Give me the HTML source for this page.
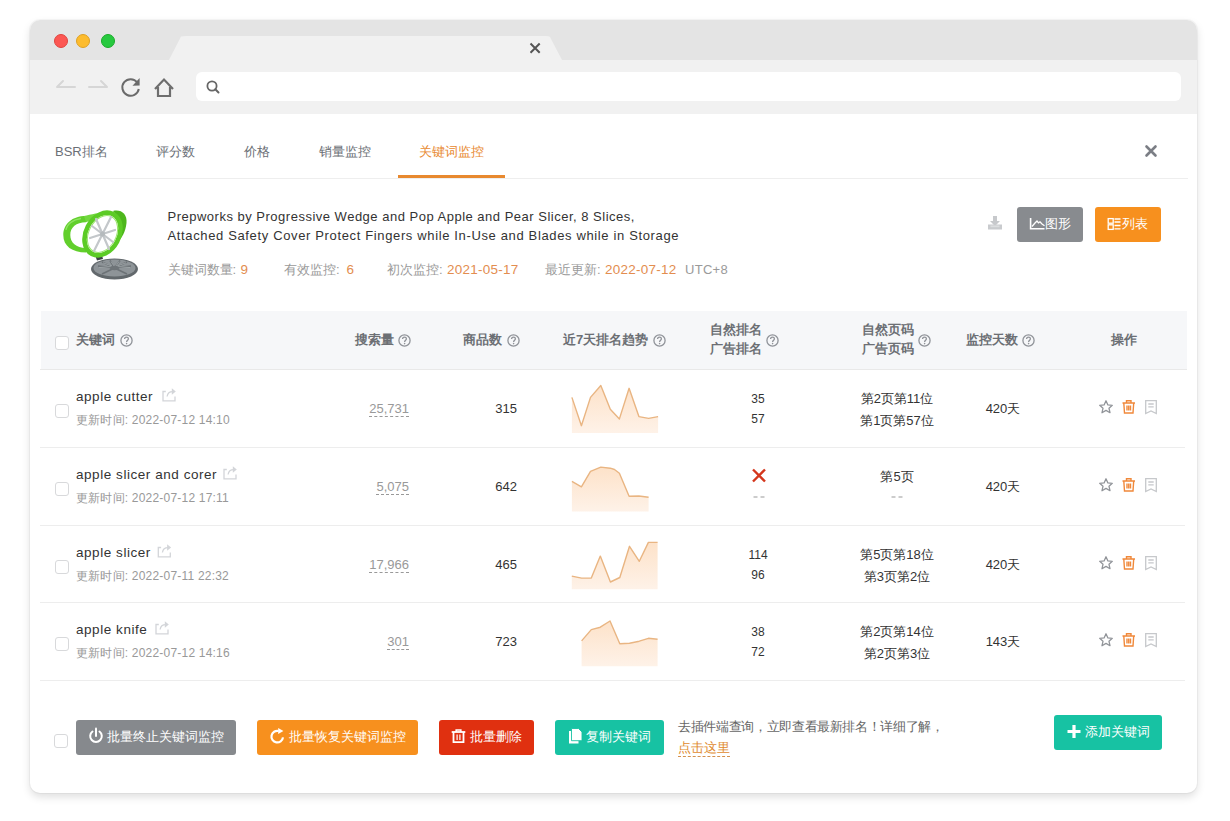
<!DOCTYPE html>
<html><head><meta charset="utf-8">
<style>
*{box-sizing:border-box;margin:0;padding:0}
html,body{width:1230px;height:821px;background:#fff;overflow:hidden;font-family:"Liberation Sans",sans-serif;color:#333}
.a{position:absolute;white-space:nowrap}
#win{position:absolute;left:30px;top:20px;width:1167px;height:773px;border-radius:10px;background:#fff;box-shadow:0 0 0 1px rgba(0,0,0,.03),0 4px 9px rgba(0,0,0,.13);overflow:hidden}
#title{position:absolute;left:0;top:0;width:1167px;height:40px;background:#e4e4e4}
#toolbar{position:absolute;left:0;top:40px;width:1167px;height:54px;background:#f1f1f1}
.dot{position:absolute;width:14px;height:14px;border-radius:50%}
#addr{position:absolute;left:166px;top:52px;width:985px;height:29px;background:#fff;border-radius:6px}
.tabt{font-size:13px;color:#6b6f76;top:144px;height:16px;line-height:16px}
.hd{font-size:13px;color:#6c6f74;font-weight:bold;line-height:16px;height:16px}
.q{position:absolute}
.cb{position:absolute;width:14px;height:14px;border:1px solid #d8d9db;border-radius:3px;background:#fff}
.kw{font-size:13.5px;color:#333;letter-spacing:.55px;line-height:16px;height:16px}
.ut{font-size:12px;color:#999;line-height:14px;height:14px;letter-spacing:.2px}
.num{font-size:13px;color:#333;line-height:16px;height:16px}
.sv{font-size:13px;color:#999;line-height:14px;height:15px;border-bottom:1px dashed #999}
.rk{font-size:12px;color:#333;line-height:14px;height:14px;text-align:center;width:40px}
.pg{font-size:13px;color:#333;line-height:16px;height:16px;text-align:center;width:90px}
.day{font-size:13px;color:#333;line-height:16px;height:16px;text-align:center;width:60px}
.meta{top:262px;font-size:13px;line-height:16px;color:#9a9a9a}
.mv{color:#e38d4f;font-size:13.5px}
.line{position:absolute;left:10px;width:1147px;height:1px;background:#ebeef5}
.btn{position:absolute;height:35px;border-radius:3px;color:#fff;font-size:13px;line-height:35px;white-space:nowrap}
</style></head><body>
<div id="win">
  <div id="title"></div>
  <div class="dot" style="left:24px;top:14px;background:#fc5753;border:1px solid #e0443e"></div>
  <div class="dot" style="left:46px;top:14px;background:#fdbc2e;border:1px solid #dea123"></div>
  <div class="dot" style="left:71px;top:14px;background:#27c93f;border:1px solid #1aab29"></div>
  <svg class="a" style="left:0;top:0" width="1167" height="94">
    <path d="M139 40 L151 16.5 Q153 16 156 16 L516 16 Q519 16 520 17 L532 40 Z" fill="#f1f1f1"/>
    <path d="M500.5 23.5 L509.7 32.7 M509.7 23.5 L500.5 32.7" stroke="#555" stroke-width="2"/>
  </svg>
  <div id="toolbar"></div>
  <div id="addr"></div>
  <svg class="a" style="left:0;top:40px" width="200" height="54">
    <path d="M27 27 L45 27 M27 27 L33 21" stroke="#d6d6d6" stroke-width="2" fill="none" stroke-linecap="round"/>
    <path d="M59 27 L77 27 M77 27 L71 21" stroke="#d6d6d6" stroke-width="2" fill="none" stroke-linecap="round"/>
    <path d="M108.8 29 A8.3 8.3 0 1 1 107.3 22.5" stroke="#6b6b6b" stroke-width="2" fill="none"/>
    <path d="M109.6 18 L109.6 25.6 L102.5 25.7 Z" fill="#6b6b6b"/>
    <path d="M125 29 L134 19.5 L143 29 M128 27 L128 36 L140 36 L140 27" stroke="#6e6e6e" stroke-width="2.2" fill="none" stroke-linejoin="miter"/>
    <circle cx="182" cy="26" r="4.6" stroke="#666" stroke-width="1.8" fill="none"/>
    <path d="M185.3 29.3 L188.5 32.5" stroke="#666" stroke-width="2" stroke-linecap="round"/>
  </svg>
</div>

<!-- content (page coordinates) -->
<div class="a tabt" style="left:55px">BSR排名</div>
<div class="a tabt" style="left:156px">评分数</div>
<div class="a tabt" style="left:244px">价格</div>
<div class="a tabt" style="left:319px">销量监控</div>
<div class="a tabt" style="left:419px;color:#e8892f">关键词监控</div>
<div class="a" style="left:398px;top:175px;width:107px;height:3px;background:#e8892f"></div>
<div class="a" style="left:40px;top:178px;width:1148px;height:1px;background:#eeeeee"></div>
<svg class="a" style="left:1140px;top:140px" width="22" height="22"><path d="M6.5 6.5 L15.5 15.5 M15.5 6.5 L6.5 15.5" stroke="#7b7e85" stroke-width="2.6" stroke-linecap="round"/></svg>

<!-- product -->
<svg class="a" style="left:55px;top:200px" width="90" height="90" id="prod">
  <ellipse cx="59.5" cy="69" rx="23.5" ry="10.5" fill="#62686c"/>
  <ellipse cx="59.5" cy="68" rx="21" ry="8.4" fill="#8e9498"/>
  <g stroke="#6c7276" stroke-width="1.6"><path d="M59.5 68 L43 66 M59.5 68 L47 62 M59.5 68 L55 60.5 M59.5 68 L65 60.5 M59.5 68 L72 62 M59.5 68 L76 66 M59.5 68 L72 74 M59.5 68 L47 74"/></g>
  <g stroke="#a3a9ac" stroke-width="0.8"><path d="M44 67.5 L57 66.5 M48 62.8 L57 66 M56 61.5 L59 66 M64 61.5 L61 66 M71 62.8 L62 66 M75 67.5 L62 66.5"/></g>
  <ellipse cx="59.5" cy="68" rx="4.5" ry="2.2" fill="#6e7478"/>
  <path d="M39.5 53.5 L46 51.5 L48 59 L42 60.5 Z" fill="#3b4144"/>
  <path d="M31 16 C17 16 8.3 24 8.3 35 C8.3 46 17 52.5 31 52.5 L31 48 C21 48 15.3 42.5 15.3 35 C15.3 27.5 21 22.3 31 22.3 Z" fill="#62cf2c"/>
  <path d="M11 30 C12 24 18 19.5 26 18.5" stroke="#8ee362" stroke-width="1.3" fill="none"/>
  <path d="M29 16 C36 14 48 12 56 12.5 L52 18 C44 18 36 20 31 22.3 Z" fill="#72d83e"/>
  <path d="M58 11 C66 9 72.5 14 71.5 23 C70.5 32 67 38 62 43 L60.5 41 C64.5 34 66 26 63 17 Z" fill="#4db61c"/>
  <ellipse cx="47.5" cy="34" rx="16.5" ry="22.5" transform="rotate(28 47.5 34)" fill="#fff" stroke="#5ccb25" stroke-width="4.6"/>
  <ellipse cx="47.5" cy="34" rx="13.6" ry="19.5" transform="rotate(28 47.5 34)" fill="none" stroke="#9be56f" stroke-width="1"/>
  <g stroke="#c3c7ca" stroke-width="2.2" stroke-linecap="round"><path d="M47.5 34 L56 17 M47.5 34 L39 51 M47.5 34 L60 30 M47.5 34 L35 38 M47.5 34 L41 19 M47.5 34 L54 49 M47.5 34 L58 42 M47.5 34 L37 26"/></g>
  <circle cx="47.5" cy="34" r="2.5" fill="#b5babd"/>
</svg>
<div class="a" style="left:167.5px;top:207px;font-size:13px;line-height:19px;color:#333;letter-spacing:.5px">Prepworks by Progressive Wedge and Pop Apple and Pear Slicer, 8 Slices,</div>
<div class="a" style="left:167.5px;top:226px;font-size:13px;line-height:19px;color:#333;letter-spacing:.64px">Attached Safety Cover Protect Fingers while In-Use and Blades while in Storage</div>
<div class="a meta" style="left:167.5px">关键词数量:</div>
<div class="a meta mv" style="left:240.5px">9</div>
<div class="a meta" style="left:284px">有效监控:</div>
<div class="a meta mv" style="left:346.5px">6</div>
<div class="a meta" style="left:387px">初次监控:</div>
<div class="a meta mv" style="left:447px;letter-spacing:.25px">2021-05-17</div>
<div class="a meta" style="left:545px">最近更新:</div>
<div class="a meta mv" style="left:605px;letter-spacing:.25px">2022-07-12</div>
<div class="a meta" style="left:685px;letter-spacing:.3px">UTC+8</div>
<svg class="a" style="left:987px;top:215px" width="16" height="16">
  <path d="M6 1 L10 1 L10 6 L13 6 L8 11 L3 6 L6 6 Z" fill="#c7c9cc"/>
  <path d="M1 9.5 L15 9.5 L15 14.5 L1 14.5 Z" fill="#c9cbce"/><path d="M3.5 10.5 L12.5 10.5 L12.5 12.2 L3.5 12.2 Z" fill="#dcdee0"/>
</svg>
<div class="btn" style="left:1017px;top:207px;width:66px;background:#888b8f;"></div>
<div class="btn" style="left:1095px;top:207px;width:66px;background:#f7901e;"></div>
<svg class="a" style="left:1028px;top:216px" width="20" height="16">
  <path d="M2.6 2 L2.6 12.8 L16.5 12.8" stroke="#fff" stroke-width="1.6" fill="none"/>
  <path d="M4 10.5 L7 7 L9 5 L10.5 6.8 L12 5.8 L14 8 L16.5 9.8" stroke="#fff" stroke-width="1.3" fill="none"/>
</svg>
<div class="a" style="left:1045px;top:216px;font-size:13px;line-height:16px;color:#fff">图形</div>
<svg class="a" style="left:1105px;top:216px" width="18" height="16">
  <rect x="3.2" y="2.6" width="5" height="4.6" stroke="#fff" stroke-width="1.3" fill="none"/>
  <rect x="3.2" y="8.8" width="5" height="4.6" stroke="#fff" stroke-width="1.3" fill="none"/>
  <path d="M9.5 3 L15.5 3 M9.5 6 L15.5 6 M9.5 9.5 L15.5 9.5 M9.5 12.8 L15.5 12.8" stroke="#fff" stroke-width="1.3"/>
</svg>
<div class="a" style="left:1121.5px;top:216px;font-size:13px;line-height:16px;color:#fff">列表</div>
<!--TABLE-->
<div class="a" style="left:41px;top:311px;width:1146px;height:58px;background:#f6f7f9"></div>
<div class="a" style="left:40px;top:369px;width:1147px;height:1px;background:#e9e9e9"></div>
<div class="cb" style="left:55px;top:336px"></div>
<div class="a hd" style="left:76px;top:332px">关键词</div><svg class="a q" style="left:119.5px;top:334px" width="14" height="14"><circle cx="6.5" cy="6.5" r="5.6" fill="none" stroke="#909399" stroke-width="1.3"/><path d="M4.6 5 C4.6 3.8 5.4 3.1 6.5 3.1 C7.6 3.1 8.4 3.8 8.4 4.8 C8.4 6.1 6.6 6.3 6.6 7.9" fill="none" stroke="#909399" stroke-width="1.3"/><circle cx="6.6" cy="9.6" r="0.8" fill="#909399"/></svg>
<div class="a hd" style="left:355px;top:332px">搜索量</div><svg class="a q" style="left:398px;top:334px" width="14" height="14"><circle cx="6.5" cy="6.5" r="5.6" fill="none" stroke="#909399" stroke-width="1.3"/><path d="M4.6 5 C4.6 3.8 5.4 3.1 6.5 3.1 C7.6 3.1 8.4 3.8 8.4 4.8 C8.4 6.1 6.6 6.3 6.6 7.9" fill="none" stroke="#909399" stroke-width="1.3"/><circle cx="6.6" cy="9.6" r="0.8" fill="#909399"/></svg>
<div class="a hd" style="left:463px;top:332px">商品数</div><svg class="a q" style="left:506.5px;top:334px" width="14" height="14"><circle cx="6.5" cy="6.5" r="5.6" fill="none" stroke="#909399" stroke-width="1.3"/><path d="M4.6 5 C4.6 3.8 5.4 3.1 6.5 3.1 C7.6 3.1 8.4 3.8 8.4 4.8 C8.4 6.1 6.6 6.3 6.6 7.9" fill="none" stroke="#909399" stroke-width="1.3"/><circle cx="6.6" cy="9.6" r="0.8" fill="#909399"/></svg>
<div class="a hd" style="left:563px;top:332px">近7天排名趋势</div><svg class="a q" style="left:653px;top:334px" width="14" height="14"><circle cx="6.5" cy="6.5" r="5.6" fill="none" stroke="#909399" stroke-width="1.3"/><path d="M4.6 5 C4.6 3.8 5.4 3.1 6.5 3.1 C7.6 3.1 8.4 3.8 8.4 4.8 C8.4 6.1 6.6 6.3 6.6 7.9" fill="none" stroke="#909399" stroke-width="1.3"/><circle cx="6.6" cy="9.6" r="0.8" fill="#909399"/></svg>
<div class="a hd" style="left:710px;top:322px">自然排名</div>
<div class="a hd" style="left:710px;top:341px">广告排名</div><svg class="a q" style="left:766px;top:334px" width="14" height="14"><circle cx="6.5" cy="6.5" r="5.6" fill="none" stroke="#909399" stroke-width="1.3"/><path d="M4.6 5 C4.6 3.8 5.4 3.1 6.5 3.1 C7.6 3.1 8.4 3.8 8.4 4.8 C8.4 6.1 6.6 6.3 6.6 7.9" fill="none" stroke="#909399" stroke-width="1.3"/><circle cx="6.6" cy="9.6" r="0.8" fill="#909399"/></svg>
<div class="a hd" style="left:862px;top:322px">自然页码</div>
<div class="a hd" style="left:862px;top:341px">广告页码</div><svg class="a q" style="left:918px;top:334px" width="14" height="14"><circle cx="6.5" cy="6.5" r="5.6" fill="none" stroke="#909399" stroke-width="1.3"/><path d="M4.6 5 C4.6 3.8 5.4 3.1 6.5 3.1 C7.6 3.1 8.4 3.8 8.4 4.8 C8.4 6.1 6.6 6.3 6.6 7.9" fill="none" stroke="#909399" stroke-width="1.3"/><circle cx="6.6" cy="9.6" r="0.8" fill="#909399"/></svg>
<div class="a hd" style="left:966px;top:332px">监控天数</div><svg class="a q" style="left:1022px;top:334px" width="14" height="14"><circle cx="6.5" cy="6.5" r="5.6" fill="none" stroke="#909399" stroke-width="1.3"/><path d="M4.6 5 C4.6 3.8 5.4 3.1 6.5 3.1 C7.6 3.1 8.4 3.8 8.4 4.8 C8.4 6.1 6.6 6.3 6.6 7.9" fill="none" stroke="#909399" stroke-width="1.3"/><circle cx="6.6" cy="9.6" r="0.8" fill="#909399"/></svg>
<div class="a hd" style="left:1111px;top:332px">操作</div>
<div class="cb" style="left:55px;top:404px"></div>
<div class="a kw" style="left:76px;top:389px">apple cutter</div>
<div class="a ut" style="left:76px;top:413px">更新时间: 2022-07-12 14:10</div>
<div class="a sv" style="right:821px;top:402px">25,731</div>
<div class="a num" style="right:713px;top:401px">315</div>
<div class="a rk" style="left:738px;top:392px">35</div>
<div class="a rk" style="left:738px;top:412px">57</div>
<div class="a pg" style="left:852px;top:391px">第2页第11位</div>
<div class="a pg" style="left:852px;top:413px">第1页第57位</div>
<div class="a day" style="left:973px;top:401px">420天</div>
<div class="a" style="left:40px;top:447px;width:1145px;height:1px;background:#ededed"></div>
<div class="cb" style="left:55px;top:482px"></div>
<div class="a kw" style="left:76px;top:467px">apple slicer and corer</div>
<div class="a ut" style="left:76px;top:491px">更新时间: 2022-07-12 17:11</div>
<div class="a sv" style="right:821px;top:480px">5,075</div>
<div class="a num" style="right:713px;top:479px">642</div>
<div class="a pg" style="left:852px;top:469px">第5页</div>
<div class="a day" style="left:973px;top:479px">420天</div>
<div class="a" style="left:40px;top:525px;width:1145px;height:1px;background:#ededed"></div>
<div class="cb" style="left:55px;top:560px"></div>
<div class="a kw" style="left:76px;top:545px">apple slicer</div>
<div class="a ut" style="left:76px;top:569px">更新时间: 2022-07-11 22:32</div>
<div class="a sv" style="right:821px;top:558px">17,966</div>
<div class="a num" style="right:713px;top:557px">465</div>
<div class="a rk" style="left:738px;top:548px">114</div>
<div class="a rk" style="left:738px;top:568px">96</div>
<div class="a pg" style="left:852px;top:547px">第5页第18位</div>
<div class="a pg" style="left:852px;top:569px">第3页第2位</div>
<div class="a day" style="left:973px;top:557px">420天</div>
<div class="a" style="left:40px;top:602px;width:1145px;height:1px;background:#ededed"></div>
<div class="cb" style="left:55px;top:637px"></div>
<div class="a kw" style="left:76px;top:622px">apple knife</div>
<div class="a ut" style="left:76px;top:646px">更新时间: 2022-07-12 14:16</div>
<div class="a sv" style="right:821px;top:635px">301</div>
<div class="a num" style="right:713px;top:634px">723</div>
<div class="a rk" style="left:738px;top:625px">38</div>
<div class="a rk" style="left:738px;top:645px">72</div>
<div class="a pg" style="left:852px;top:624px">第2页第14位</div>
<div class="a pg" style="left:852px;top:646px">第2页第3位</div>
<div class="a day" style="left:973px;top:634px">143天</div>
<div class="a" style="left:40px;top:680px;width:1145px;height:1px;background:#ededed"></div>
<svg class="a" style="left:0;top:0" width="1230" height="821"><defs><linearGradient id="sg" x1="0" y1="0" x2="0" y2="1"><stop offset="0" stop-color="#fde2c9"/><stop offset="1" stop-color="#fef2e8"/></linearGradient></defs>
<path d="M571.9 397.4 L581.4 425.7 L590.5 397.4 L600.8 385.5 L610.3 409.3 L619.4 418.9 L629.1 388.3 L638.9 416.6 L648.6 418.4 L658.1 416.6 L658.1 433 L571.9 433 Z" fill="url(#sg)"/>
<path d="M571.9 397.4 L581.4 425.7 L590.5 397.4 L600.8 385.5 L610.3 409.3 L619.4 418.9 L629.1 388.3 L638.9 416.6 L648.6 418.4 L658.1 416.6" stroke="#e9b582" stroke-width="1.4" fill="none" stroke-linejoin="round"/>
<path transform="translate(1099 400)" d="M7 0.8 L8.9 4.9 L13.3 5.3 L10 8.3 L11 12.7 L7 10.4 L3 12.7 L4 8.3 L0.7 5.3 L5.1 4.9 Z" fill="none" stroke="#919499" stroke-width="1.3" stroke-linejoin="round"/>
<g transform="translate(1122 400)" fill="none" stroke="#f0883a" stroke-width="1.4"><path d="M0.5 3 L13 3 M4.5 3 L4.5 0.8 L9 0.8 L9 3"/><path d="M1.8 3 L2.5 13 L11 13 L11.7 3"/><path d="M5 5.5 L5 10.5 M6.75 5.5 L6.75 10.5 M8.5 5.5 L8.5 10.5"/></g>
<g transform="translate(1145 400)" fill="none" stroke="#c6c8cb" stroke-width="1.3"><path d="M0.7 0.7 L11.3 0.7 L11.3 13.5 L6 11 L0.7 13.5 Z"/><path d="M3.3 4 L8.7 4 M3.3 6.8 L8.7 6.8"/></g>
<g transform="translate(161.8 387)" fill="none" stroke="#d3d5d9" stroke-width="1.3"><path d="M4 4.5 L1.2 4.5 L1.2 13.8 L13.2 13.8 L13.2 9.5"/><path d="M5.3 9.5 C5.8 6 8 4.6 11 4.6"/></g><path transform="translate(161.8 387)" d="M10 1.2 L14 4.5 L10 7.8 Z" fill="#d3d5d9"/>
<path d="M753.5 497 L757.5 497 M760.5 497 L764.5 497" stroke="#9a9a9a" stroke-width="1.1"/>
<path d="M891.5 497 L895.5 497 M898.5 497 L902.5 497" stroke="#9a9a9a" stroke-width="1.1"/>
<path d="M753 469.5 L765 481.5 M765 469.5 L753 481.5" stroke="#d4361c" stroke-width="2.4"/>
<path d="M571.9 481.4 L581.4 486.8 L590.5 471.3 L600.8 467.1 L610.3 468.2 L614.5 469.5 L619.4 473.2 L629.1 496.3 L638.9 496.0 L648.6 497.3 L648.6 511.5 L571.9 511.5 Z" fill="url(#sg)"/>
<path d="M571.9 481.4 L581.4 486.8 L590.5 471.3 L600.8 467.1 L610.3 468.2 L614.5 469.5 L619.4 473.2 L629.1 496.3 L638.9 496.0 L648.6 497.3" stroke="#e9b582" stroke-width="1.4" fill="none" stroke-linejoin="round"/>
<path transform="translate(1099 478)" d="M7 0.8 L8.9 4.9 L13.3 5.3 L10 8.3 L11 12.7 L7 10.4 L3 12.7 L4 8.3 L0.7 5.3 L5.1 4.9 Z" fill="none" stroke="#919499" stroke-width="1.3" stroke-linejoin="round"/>
<g transform="translate(1122 478)" fill="none" stroke="#f0883a" stroke-width="1.4"><path d="M0.5 3 L13 3 M4.5 3 L4.5 0.8 L9 0.8 L9 3"/><path d="M1.8 3 L2.5 13 L11 13 L11.7 3"/><path d="M5 5.5 L5 10.5 M6.75 5.5 L6.75 10.5 M8.5 5.5 L8.5 10.5"/></g>
<g transform="translate(1145 478)" fill="none" stroke="#c6c8cb" stroke-width="1.3"><path d="M0.7 0.7 L11.3 0.7 L11.3 13.5 L6 11 L0.7 13.5 Z"/><path d="M3.3 4 L8.7 4 M3.3 6.8 L8.7 6.8"/></g>
<g transform="translate(222.8 465)" fill="none" stroke="#d3d5d9" stroke-width="1.3"><path d="M4 4.5 L1.2 4.5 L1.2 13.8 L13.2 13.8 L13.2 9.5"/><path d="M5.3 9.5 C5.8 6 8 4.6 11 4.6"/></g><path transform="translate(222.8 465)" d="M10 1.2 L14 4.5 L10 7.8 Z" fill="#d3d5d9"/>
<path d="M571.8 576.1 L581.6 578.1 L591.3 578.1 L600.3 556.1 L610.4 582.0 L619.8 577.5 L629.5 546.3 L639.3 561.3 L648.4 542.4 L657.6 542.4 L657.6 589.2 L571.8 589.2 Z" fill="url(#sg)"/>
<path d="M571.8 576.1 L581.6 578.1 L591.3 578.1 L600.3 556.1 L610.4 582.0 L619.8 577.5 L629.5 546.3 L639.3 561.3 L648.4 542.4 L657.6 542.4" stroke="#e9b582" stroke-width="1.4" fill="none" stroke-linejoin="round"/>
<path transform="translate(1099 556)" d="M7 0.8 L8.9 4.9 L13.3 5.3 L10 8.3 L11 12.7 L7 10.4 L3 12.7 L4 8.3 L0.7 5.3 L5.1 4.9 Z" fill="none" stroke="#919499" stroke-width="1.3" stroke-linejoin="round"/>
<g transform="translate(1122 556)" fill="none" stroke="#f0883a" stroke-width="1.4"><path d="M0.5 3 L13 3 M4.5 3 L4.5 0.8 L9 0.8 L9 3"/><path d="M1.8 3 L2.5 13 L11 13 L11.7 3"/><path d="M5 5.5 L5 10.5 M6.75 5.5 L6.75 10.5 M8.5 5.5 L8.5 10.5"/></g>
<g transform="translate(1145 556)" fill="none" stroke="#c6c8cb" stroke-width="1.3"><path d="M0.7 0.7 L11.3 0.7 L11.3 13.5 L6 11 L0.7 13.5 Z"/><path d="M3.3 4 L8.7 4 M3.3 6.8 L8.7 6.8"/></g>
<g transform="translate(157.10000000000002 543)" fill="none" stroke="#d3d5d9" stroke-width="1.3"><path d="M4 4.5 L1.2 4.5 L1.2 13.8 L13.2 13.8 L13.2 9.5"/><path d="M5.3 9.5 C5.8 6 8 4.6 11 4.6"/></g><path transform="translate(157.10000000000002 543)" d="M10 1.2 L14 4.5 L10 7.8 Z" fill="#d3d5d9"/>
<path d="M581.6 640.9 L591.3 629.6 L600.3 627.2 L610.0 621.0 L619.8 643.8 L629.5 643.2 L639.3 641.2 L648.4 638.3 L657.6 639.3 L657.6 666.2 L581.6 666.2 Z" fill="url(#sg)"/>
<path d="M581.6 640.9 L591.3 629.6 L600.3 627.2 L610.0 621.0 L619.8 643.8 L629.5 643.2 L639.3 641.2 L648.4 638.3 L657.6 639.3" stroke="#e9b582" stroke-width="1.4" fill="none" stroke-linejoin="round"/>
<path transform="translate(1099 633)" d="M7 0.8 L8.9 4.9 L13.3 5.3 L10 8.3 L11 12.7 L7 10.4 L3 12.7 L4 8.3 L0.7 5.3 L5.1 4.9 Z" fill="none" stroke="#919499" stroke-width="1.3" stroke-linejoin="round"/>
<g transform="translate(1122 633)" fill="none" stroke="#f0883a" stroke-width="1.4"><path d="M0.5 3 L13 3 M4.5 3 L4.5 0.8 L9 0.8 L9 3"/><path d="M1.8 3 L2.5 13 L11 13 L11.7 3"/><path d="M5 5.5 L5 10.5 M6.75 5.5 L6.75 10.5 M8.5 5.5 L8.5 10.5"/></g>
<g transform="translate(1145 633)" fill="none" stroke="#c6c8cb" stroke-width="1.3"><path d="M0.7 0.7 L11.3 0.7 L11.3 13.5 L6 11 L0.7 13.5 Z"/><path d="M3.3 4 L8.7 4 M3.3 6.8 L8.7 6.8"/></g>
<g transform="translate(154.8 620)" fill="none" stroke="#d3d5d9" stroke-width="1.3"><path d="M4 4.5 L1.2 4.5 L1.2 13.8 L13.2 13.8 L13.2 9.5"/><path d="M5.3 9.5 C5.8 6 8 4.6 11 4.6"/></g><path transform="translate(154.8 620)" d="M10 1.2 L14 4.5 L10 7.8 Z" fill="#d3d5d9"/>
</svg>
<!--/TABLE-->
<!--FOOTER-->
<div class="cb" style="left:54px;top:734px"></div>
<div class="btn" style="left:76px;top:720px;width:160px;background:#86898d"></div>
<div class="btn" style="left:257px;top:720px;width:161px;background:#f7901e"></div>
<div class="btn" style="left:439px;top:720px;width:95px;background:#e03010"></div>
<div class="btn" style="left:555px;top:720px;width:109px;background:#17c2a3"></div>
<div class="a" style="left:107px;top:728px;font-size:13px;line-height:18px;color:#fff">批量终止关键词监控</div>
<div class="a" style="left:289px;top:728px;font-size:13px;line-height:18px;color:#fff">批量恢复关键词监控</div>
<div class="a" style="left:470px;top:728px;font-size:13px;line-height:18px;color:#fff">批量删除</div>
<div class="a" style="left:586px;top:728px;font-size:13px;line-height:18px;color:#fff">复制关键词</div>
<svg class="a" style="left:0;top:700px" width="700" height="60">
  <g fill="none" stroke="#fff" stroke-width="2" stroke-linecap="round"><path d="M92.5 31.5 A5.8 5.8 0 1 0 99.5 31.5"/><path d="M96 28.5 L96 36"/></g>
  <g fill="none" stroke="#fff" stroke-width="2.2"><path d="M283 37.4 A5.8 5.8 0 1 1 278.6 31"/></g>
  <path d="M278.2 27.9 L283.4 31 L278.2 34.1 Z" fill="#fff"/>
  <g transform="translate(451.5 29)" fill="none" stroke="#fff"><path d="M0.2 3 L13.8 3" stroke-width="1.8"/><path d="M4.6 3 L4.6 1 L9.4 1 L9.4 3" stroke-width="1.4"/><path d="M2 3 L2 13.2 L12 13.2 L12 3" stroke-width="1.8"/><path d="M5.6 5.5 L5.6 11 M8.4 5.5 L8.4 11" stroke-width="1.2"/></g>
  <rect x="569" y="31" width="9.5" height="12.5" fill="#fff"/>
  <path d="M571.5 28.5 L578.5 28.5 L582 32 L582 40.7 L571.5 40.7 Z" fill="#fff" stroke="#17c2a3" stroke-width="0.9"/>
</svg>
<div class="a" style="left:678px;top:718px;font-size:13px;line-height:18px;color:#666;letter-spacing:-.35px">去插件端查询，立即查看最新排名！详细了解，</div>
<div class="a" style="left:678px;top:740px;font-size:13px;line-height:16px;color:#e08a2e;border-bottom:1px dashed #d4914e;height:17px">点击这里</div>
<div class="btn" style="left:1054px;top:715px;width:108px;height:35px;background:#17c2a3"></div>
<svg class="a" style="left:1064px;top:721.5px" width="20" height="20"><path d="M10 3 L10 16 M3.5 9.5 L16.5 9.5" stroke="#fff" stroke-width="3.2"/></svg>
<div class="a" style="left:1085px;top:723px;font-size:13px;line-height:18px;color:#fff">添加关键词</div>
<!--/FOOTER-->
</body></html>
